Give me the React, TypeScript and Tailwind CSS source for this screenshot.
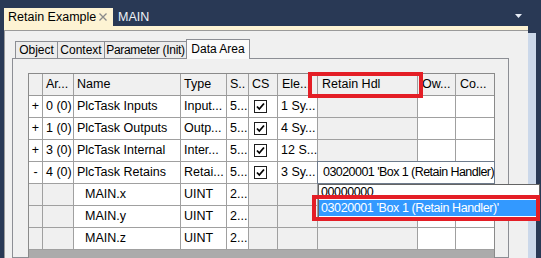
import React from 'react'

const W = ['w-[14px]', 'w-[31px]', 'w-[107px]', 'w-[46px]', 'w-[22px]', 'w-[29px]', 'w-[40px]', 'w-[100px]', 'w-[38px]', 'w-[38px]']

type Row = { cells: string[]; child?: boolean }

const rows: Row[] = [
  { cells: ['+', '0 (0)', 'PlcTask Inputs', 'Input...', '5...', 'x', '1 Sy...', '', '', ''] },
  { cells: ['+', '1 (0)', 'PlcTask Outputs', 'Outp...', '5...', 'x', '4 Sy...', '', '', ''] },
  { cells: ['+', '3 (0)', 'PlcTask Internal', 'Inter...', '5...', 'x', '12 S...', '', '', ''] },
  { cells: ['-', '4 (0)', 'PlcTask Retains', 'Retai...', '5...', 'x', '3 Sy...', '', '', ''] },
  { cells: ['', '', 'MAIN.x', 'UINT', '2...', '', '', '', '', ''], child: true },
  { cells: ['', '', 'MAIN.y', 'UINT', '2...', '', '', '', '', ''], child: true },
  { cells: ['', '', 'MAIN.z', 'UINT', '2...', '', '', '', '', ''], child: true },
]

function Check() {
  return (
    <div className="ml-[2px] w-[13px] h-[13px] bg-white border border-[#1e1e1e] flex items-center justify-center">
      <svg width="11" height="11" viewBox="0 0 11 11">
        <path d="M2 5.5 L4.3 8 L9 2.5" fill="none" stroke="#000" strokeWidth="1.8" />
      </svg>
    </div>
  )
}

function cellBg(row: Row, i: number) {
  if (i === 7) return 'bg-[#f0f0f0]'
  if (row.child && (i === 0 || i === 1 || i === 5 || i === 6)) return 'bg-[#f0f0f0]'
  return 'bg-white'
}

export default function App() {
  return (
    <div className="relative w-[541px] h-[258px] overflow-hidden bg-[#293955] text-[12px] text-black font-['Liberation_Sans',sans-serif]">
      {/* document tabs */}
      <div className="h-[26px] flex items-end">
        <div className="ml-[4px] w-[109px] h-[18px] bg-[#fdf3d3] flex items-center pl-[4px] whitespace-nowrap">
          <span className="text-[12.5px]">Retain Example</span>
          <svg className="ml-auto mr-[6px]" width="8" height="8" viewBox="0 0 8 8">
            <path d="M0.5 0.5 L7.5 7.5 M7.5 0.5 L0.5 7.5" stroke="#8a8a8a" strokeWidth="1.3" />
          </svg>
        </div>
        <div className="h-[18px] flex items-center ml-[5px] text-[12.5px] text-[#eef1f6]">MAIN</div>
        <svg className="ml-auto mr-[19px] mb-[8px]" width="7" height="4" viewBox="0 0 7 4">
          <path d="M0 0 L7 0 L3.5 4 Z" fill="#e6ecf5" />
        </svg>
      </div>

      <div className="flex h-[232px]">
        <div className="w-[4px]" />
        <div className="w-[524px] flex flex-col">
          <div className="h-[4px] bg-[#fdf3d3]" />
          <div className="flex-1 bg-[#f0f0f0] border-l border-t border-[#9a9a9a] pt-[8px] pl-[7px]">
            {/* property tabs */}
            <div className="flex items-end h-[19px] pl-[3px] whitespace-nowrap">
              <div className="w-[43px] h-[17px] border border-b-0 border-[#8c8e94] bg-[#ececec] flex items-center justify-center">Object</div>
              <div className="-ml-px w-[48px] h-[17px] border border-b-0 border-[#8c8e94] bg-[#ececec] flex items-center justify-center">Context</div>
              <div className="-ml-px w-[83px] h-[17px] border border-b-0 border-[#8c8e94] bg-[#ececec] flex items-center justify-center tracking-[-0.3px]">Parameter (Init)</div>
              <div className="relative z-10 -ml-px -mb-px w-[64px] h-[20px] border border-b-0 border-[#8c8e94] bg-[#fbfbfb] flex items-center justify-center pb-[2px]">Data Area</div>
            </div>
            <div className="w-[497px] h-[200px] border border-[#8c8e94] bg-[#f0f0f0] pt-[14px] pl-[15px]">
              {/* data grid */}
              <div className="w-[467px] h-[190px] border border-[#8a8a8a] bg-[#ababab] text-[12.5px]">
                <div className="flex h-[22px] border-b border-[#9a9a9a] bg-[#f0f0f0]">
                  {['', 'Ar...', 'Name', 'Type', 'S..', 'CS', 'Ele...', 'Retain Hdl', 'Ow...', 'Co...'].map((t, i) => (
                    <div key={i} className={`${W[i]} h-full flex items-center whitespace-nowrap overflow-hidden ${i === 9 ? '' : 'border-r border-[#a0a0a0]'} ${i >= 6 ? 'pl-[4px]' : 'pl-[3px]'}`}>
                      {t}
                    </div>
                  ))}
                </div>
                {rows.map((row, r) => (
                  <div key={r} className="flex h-[22px] border-b border-[#a0a0a0]">
                    {row.cells.map((t, i) => (
                      <div
                        key={i}
                        className={`${W[i]} ${cellBg(row, i)} h-full flex items-center whitespace-nowrap overflow-hidden ${i === 9 ? '' : 'border-r border-[#a0a0a0]'} ${i === 0 ? 'justify-center' : row.child && i === 2 ? 'pl-[11px]' : 'pl-[3px]'}`}
                      >
                        {i === 5 && t === 'x' ? <Check /> : t}
                      </div>
                    ))}
                  </div>
                ))}
              </div>
            </div>
          </div>
        </div>
        <div className="w-[8px] mt-[7px] bg-[#cbd8ea]" />
        <div className="flex-1" />
      </div>

      {/* combo box in Retain Hdl cell */}
      <div className="absolute left-[317px] top-[161px] w-[178px] h-[23px] bg-white border border-[#6e7b8c] flex items-center pl-[5px] whitespace-nowrap overflow-hidden text-[12.5px] tracking-[-0.55px]">
        03020001 'Box 1 (Retain Handler)
      </div>

      {/* dropdown list */}
      <div className="absolute left-[318px] top-[184px] w-[222px] h-[35px] bg-white border border-[#646464] whitespace-nowrap overflow-hidden text-[12.5px] tracking-[-0.4px]">
        <div className="h-[15px] flex items-center pl-[2px]">00000000</div>
        <div className="h-[16px] flex items-center pl-[2px] bg-[#3399ff] text-white">03020001 'Box 1 (Retain Handler)'</div>
      </div>

      {/* red markers */}
      <div className="absolute left-[308px] top-[72px] w-[115px] h-[26px] border-4 border-[#e41e26]" />
      <div className="absolute left-[312px] top-[195px] w-[228px] h-[26px] border-4 border-[#e41e26]" />
    </div>
  )
}
